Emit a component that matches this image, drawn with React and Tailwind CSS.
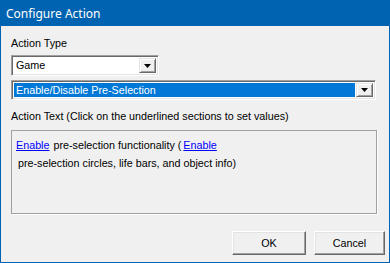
import React from "react";

function DropButton() {
  return (
    <div className="w-[17px] h-full bg-[#f0f0f0] border-t border-l border-t-[#e3e3e3] border-l-[#e3e3e3] border-b border-r border-b-[#696969] border-r-[#696969] shadow-[inset_1px_1px_0_#ffffff,inset_-1px_-1px_0_#a0a0a0] flex items-center justify-center">
      <svg width="7" height="4" viewBox="0 0 7 4">
        <path d="M0 0H7L3.5 4Z" fill="#000" />
      </svg>
    </div>
  );
}

function Btn({ w, children }) {
  return (
    <button
      className={`${w} h-[24px] bg-[#f0f0f0] border-t border-l border-t-white border-l-white border-b border-r border-b-[#696969] border-r-[#696969] shadow-[inset_-1px_-1px_0_#a0a0a0,inset_1px_1px_0_#e3e3e3] flex items-center justify-center`}
    >
      {children}
    </button>
  );
}

export default function App() {
  return (
    <div
      className="w-[390px] h-[263px] border border-[#0063b1] bg-[#f0f0f0] flex flex-col text-[10.75px] leading-[13px] text-black"
      style={{ fontFamily: '"Liberation Sans", Arial, sans-serif' }}
    >
      <div className="h-[25px] bg-[#0063b1] flex items-center pl-[5px] shrink-0">
        <span className="text-white text-[12px]" style={{ fontFamily: '"Noto Sans", "Open Sans", sans-serif' }}>
          Configure Action
        </span>
      </div>
      <div className="flex-1 flex flex-col pl-[10px] pt-[11px]">
        <div>Action Type</div>
        <div className="mt-[5px] w-[148px] h-[21px] bg-white border-t border-l border-t-[#a0a0a0] border-l-[#a0a0a0] border-b border-r border-b-white border-r-white shadow-[inset_1px_1px_0_#696969,inset_-1px_-1px_0_#e3e3e3] flex items-stretch p-[2px]">
          <div className="flex-1 flex items-center pl-[2px]">Game</div>
          <DropButton />
        </div>
        <div className="mt-[4px] w-[365px] h-[20px] bg-white border-t border-l border-t-[#a0a0a0] border-l-[#a0a0a0] border-b border-r border-b-white border-r-white shadow-[inset_1px_1px_0_#696969,inset_-1px_-1px_0_#e3e3e3] flex items-stretch p-[2px]">
          <div className="flex-1 flex items-center pl-[2px] bg-[#0078d7] text-white mr-[1px]">Enable/Disable Pre-Selection</div>
          <DropButton />
        </div>
        <div className="mt-[10px]">Action Text (Click on the underlined sections to set values)</div>
        <div className="mt-[7px] w-[366px] h-[84px] border border-[#a0a0a0] shadow-[1px_1px_0_#ffffff] pl-[4px] pt-[5px] leading-[18px]">
          <div className="flex">
            <span className="text-[#0000ff] underline">Enable</span>
            <span className="ml-[4px]">pre-selection functionality (</span>
            <span className="text-[#0000ff] underline ml-[2px]">Enable</span>
          </div>
          <div className="pl-[2px]">pre-selection circles, life bars, and object info)</div>
        </div>
        <div className="flex justify-end gap-[8px] mt-[17px] pr-[4px]">
          <Btn w="w-[74px]">OK</Btn>
          <Btn w="w-[71px]">Cancel</Btn>
        </div>
      </div>
    </div>
  );
}
